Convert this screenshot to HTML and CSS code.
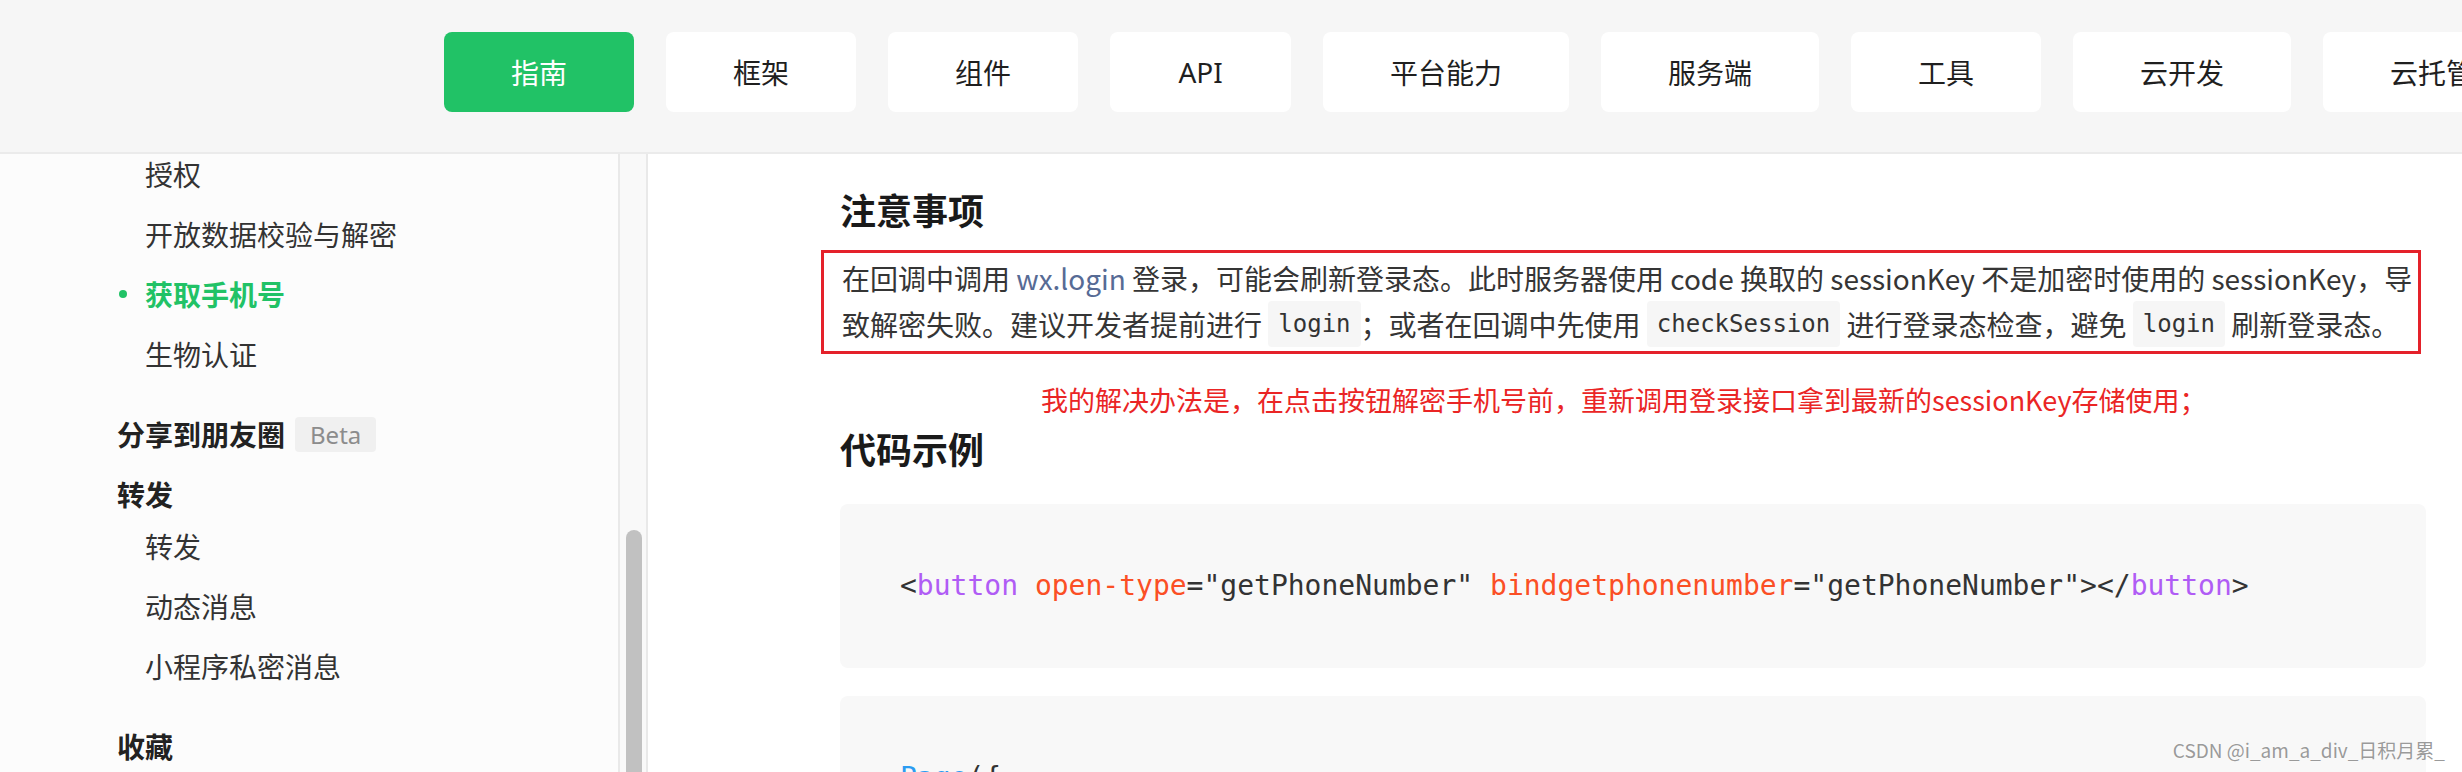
FILE: index.html
```html
<!DOCTYPE html>
<html lang="zh-CN">
<head>
<meta charset="utf-8">
<title>获取手机号</title>
<link rel="stylesheet" href="styles.css">
</head>
<body>
<div class="page">
  <header class="topbar">
    <nav class="nav">
      <a class="nav-btn active">指南</a>
      <a class="nav-btn">框架</a>
      <a class="nav-btn">组件</a>
      <a class="nav-btn nav-btn-latin">API</a>
      <a class="nav-btn">平台能力</a>
      <a class="nav-btn">服务端</a>
      <a class="nav-btn">工具</a>
      <a class="nav-btn">云开发</a>
      <a class="nav-btn">云托管</a>
    </nav>
  </header>
  <div class="main">
    <aside class="sidebar">
      <div class="side-inner">
        <ul class="sub-list">
          <li class="sub-item">授权</li>
          <li class="sub-item">开放数据校验与解密</li>
          <li class="sub-item current">获取手机号</li>
          <li class="sub-item">生物认证</li>
        </ul>
        <div class="group">
          <div class="group-title">分享到朋友圈<span class="badge">Beta</span></div>
        </div>
        <div class="group">
          <div class="group-title">转发</div>
          <ul class="sub-list">
            <li class="sub-item">转发</li>
            <li class="sub-item">动态消息</li>
            <li class="sub-item">小程序私密消息</li>
          </ul>
        </div>
        <div class="group">
          <div class="group-title">收藏</div>
        </div>
      </div>
    </aside>
    <div class="scroll-track"><div class="scroll-thumb"></div></div>
    <main class="content">
      <h2 class="heading">注意事项</h2>
      <div class="annot">
        <p class="para"><span class="line">在回调中调用 <a class="link">wx.login</a> 登录，可能会刷新登录态。此时服务器使用 code 换取的 sessionKey 不是加密时使用的 sessionKey，导</span><br><span class="line">致解密失败。建议开发者提前进行 <code class="ic">login</code>；或者在回调中先使用 <code class="ic">checkSession</code> 进行登录态检查，避免 <code class="ic">login</code> 刷新登录态。</span></p>
      </div>
      <p class="note">我的解决办法是，在点击按钮解密手机号前，重新调用登录接口拿到最新的sessionKey存储使用；</p>
      <h2 class="heading heading-code">代码示例</h2>
      <pre class="code"><span class="p">&lt;</span><span class="tag">button</span> <span class="attr">open-type</span><span class="p">=</span><span class="str">"getPhoneNumber"</span> <span class="attr">bindgetphonenumber</span><span class="p">=</span><span class="str">"getPhoneNumber"</span><span class="p">&gt;&lt;/</span><span class="tag">button</span><span class="p">&gt;</span></pre>
      <pre class="code code-2"><span class="fn">Page</span><span class="p">({</span></pre>
    </main>
  </div>
  <div class="watermark">CSDN @i_am_a_div_日积月累_</div>
</div>
</body>
</html>
```

FILE: styles.css
```css
html, body {
  margin: 0;
  padding: 0;
  background: #ffffff;
}
body {
  width: 2462px;
  height: 772px;
  overflow: hidden;
  font-family: "Noto Sans CJK SC", "Noto Sans", sans-serif;
  color: #333333;
}
.page {
  position: relative;
  width: 2462px;
  height: 772px;
  display: flex;
  flex-direction: column;
  overflow: hidden;
}
.topbar {
  height: 152px;
  flex: 0 0 152px;
  background: #f6f6f6;
  border-bottom: 2px solid #ebebeb;
  display: flex;
  align-items: flex-start;
  overflow: hidden;
}
.nav {
  display: flex;
  gap: 32px;
  padding: 32px 0 0 444px;
  white-space: nowrap;
}
.nav-btn {
  display: flex;
  align-items: center;
  justify-content: center;
  box-sizing: border-box;
  height: 80px;
  min-width: 190px;
  padding: 0 67px;
  background: #ffffff;
  border-radius: 8px;
  font-family: "Noto Sans", "Noto Sans CJK SC", sans-serif;
  font-size: 28px;
  color: #1f1f1f;
  text-decoration: none;
  flex: 0 0 auto;
}
.nav-btn-latin {
  min-width: 0;
  width: 181px;
  padding: 0;
}
.nav-btn.active {
  background: #21c266;
  color: #ffffff;
}
.main {
  flex: 1 1 auto;
  display: flex;
  min-height: 0;
}
.sidebar {
  width: 618px;
  flex: 0 0 618px;
  background: #fcfcfc;
  border-right: 2px solid #e9e9e9;
  overflow: hidden;
}
.side-inner {
  margin-top: -10px;
}
.sub-list {
  list-style: none;
  margin: 0;
  padding: 0 0 12px 0;
}
.sub-item {
  position: relative;
  height: 60px;
  line-height: 60px;
  padding-left: 145px;
  font-size: 28px;
  color: #333333;
}
.sub-item.current {
  color: #21c266;
  font-weight: 700;
}
.sub-item.current::before {
  content: "";
  position: absolute;
  left: 119px;
  top: 26px;
  width: 8px;
  height: 8px;
  border-radius: 50%;
  background: #21c266;
}
.group {
  margin-top: 16px;
}
.group-title {
  display: flex;
  align-items: center;
  height: 44px;
  padding-left: 117px;
  font-size: 28px;
  font-weight: 700;
  color: #222222;
}
.badge {
  display: inline-flex;
  align-items: center;
  height: 35px;
  margin-left: 10px;
  padding: 0 15px;
  background: #f0f0f0;
  border-radius: 4px;
  font-family: "Noto Sans", sans-serif;
  font-size: 24px;
  font-weight: 400;
  color: #8c8c8c;
}
.scroll-track {
  width: 26px;
  flex: 0 0 26px;
  background: #f9f9f9;
  border-right: 2px solid #e9e9e9;
  padding-top: 376px;
  box-sizing: content-box;
}
.scroll-thumb {
  width: 16px;
  margin-left: 6px;
  height: 400px;
  background: #c1c1c1;
  border-radius: 8px;
}
.content {
  flex: 1 1 auto;
  padding: 0 36px 0 192px;
  min-width: 0;
  overflow: hidden;
}
.heading {
  margin: 30px 0 0 0;
  height: 50px;
  line-height: 50px;
  font-size: 36px;
  font-weight: 700;
  color: #1a1a1a;
}
.heading-code {
  margin-top: 3px;
}
.annot {
  margin: 16px 5px 0 -19px;
  border: 3px solid #e4212a;
  padding: 2px 0 4px 18px;
}
.para {
  margin: 0;
  font-size: 28px;
  line-height: 46px;
  color: #353535;
}
.line {
  white-space: nowrap;
}
.link {
  color: #576b95;
  text-decoration: none;
}
.ic {
  display: inline-block;
  font-family: "DejaVu Sans Mono", monospace;
  font-size: 24px;
  line-height: 46px;
  padding: 0 10px;
  background: #f6f6f6;
  border-radius: 4px;
  color: #333333;
  vertical-align: top;
}
.note {
  margin: 26px 0 0 201px;
  font-size: 27px;
  line-height: 40px;
  color: #ea2525;
  white-space: nowrap;
}
.code {
  margin: 31px 0 0 0;
  padding: 60px 60px;
  background: #f8f8f8;
  border-radius: 8px;
  font-family: "DejaVu Sans Mono", monospace;
  font-size: 28px;
  line-height: 44px;
  color: #333333;
  white-space: pre;
}
.code-2 {
  margin-top: 28px;
}
.code .tag {
  color: #b05cf5;
}
.code .attr {
  color: #fb4f25;
}
.code .str {
  color: #333333;
}
.code .fn {
  color: #2b9cf2;
}
.watermark {
  position: absolute;
  right: 17px;
  bottom: 8px;
  font-size: 19px;
  line-height: 28px;
  color: #9a9a9a;
  text-shadow: 0 0 2px #ffffff;
}
```
